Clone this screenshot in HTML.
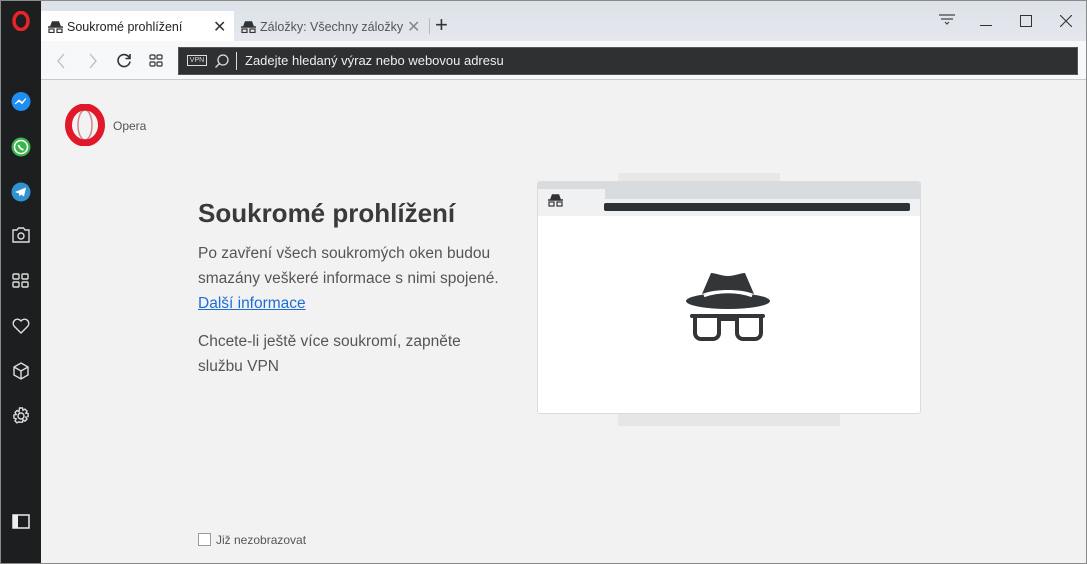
<!DOCTYPE html>
<html><head><meta charset="utf-8"><style>
*{margin:0;padding:0;box-sizing:border-box}
body{width:1087px;height:564px;overflow:hidden;font-family:"Liberation Sans",sans-serif;background:#f2f2f2;position:relative}
.abs{position:absolute}
.win{left:0;top:0;width:1087px;height:564px;border:1px solid #8a8a8a;}
.side{left:1px;top:1px;width:40px;height:562px;background:#1c1e20}
.tabbar{left:41px;top:1px;width:1045px;height:40px;background:linear-gradient(#dde2e9,#e4e8ee)}
.tab{top:11px;height:31px;font-size:12.5px;color:#222;display:flex;align-items:center}
.tool{left:41px;top:41px;width:1045px;height:39px;background:#f7f8fa;border-bottom:1px solid #c8cacc}
.addr{left:178px;top:47px;width:900px;height:28px;background:#2e3031;border:1px solid #555}
.content{left:41px;top:81px;width:1045px;height:482px;background:#f2f2f2}
p{font-size:15.5px;color:#555;line-height:25px}
</style></head><body>
<div class="abs win"></div>
<div class="abs side">
 <svg class="abs" style="left:10px;top:10px" width="20" height="20" viewBox="0 0 20 20"><ellipse cx="10" cy="10" rx="7" ry="8.5" fill="none" stroke="#e8232b" stroke-width="3.5"/></svg>
 <svg class="abs" style="left:9px;top:90px" width="22" height="22" viewBox="0 0 22 22"><circle cx="11" cy="10.5" r="9.5" fill="#1e8ef2"/><path d="M5 13l4-4 3 2.5 4-4-4 5-3-2.5z" fill="#fff" stroke="#fff" stroke-width="1"/></svg>
 <svg class="abs" style="left:9px;top:135px" width="22" height="22" viewBox="0 0 22 22"><circle cx="11" cy="11" r="9.5" fill="#3ab54a"/><circle cx="11" cy="11" r="6.5" fill="none" stroke="#fff" stroke-width="1.5"/><path d="M8.5 9c1 3 3 4.5 5 4.8" stroke="#fff" stroke-width="1.8" fill="none"/></svg>
 <svg class="abs" style="left:9px;top:180px" width="22" height="22" viewBox="0 0 22 22"><circle cx="11" cy="11" r="9.5" fill="#2f93d0"/><path d="M5 11l11-4.5-2 9-3-2-1.5 2-.5-3z" fill="#fff"/></svg>
 <svg class="abs" style="left:10px;top:225px" width="20" height="18" viewBox="0 0 20 18" fill="none" stroke="#ddd" stroke-width="1.4"><path d="M2 4h4l1.5-2h5L14 4h4v12H2z"/><circle cx="10" cy="10" r="3"/></svg>
 <svg class="abs" style="left:11px;top:271px" width="18" height="18" viewBox="0 0 18 18" fill="none" stroke="#ddd" stroke-width="1.4"><rect x="1" y="2" width="6" height="5" rx="1"/><rect x="10" y="2" width="6" height="5" rx="1"/><rect x="1" y="10" width="6" height="5" rx="1"/><rect x="10" y="10" width="6" height="5" rx="1"/></svg>
 <svg class="abs" style="left:10px;top:316px" width="20" height="18" viewBox="0 0 20 18" fill="none" stroke="#ddd" stroke-width="1.4"><path d="M10 16L3 9a4 4 0 0 1 7-5 4 4 0 0 1 7 5z"/></svg>
 <svg class="abs" style="left:10px;top:360px" width="20" height="20" viewBox="0 0 20 20" fill="none" stroke="#ddd" stroke-width="1.4"><path d="M10 2l7 4v8l-7 4-7-4V6zM3 6l7 4 7-4M10 10v8"/></svg>
 <svg class="abs" style="left:10px;top:405px" width="20" height="20" viewBox="0 0 20 20" fill="none" stroke="#ddd" stroke-width="1.4"><circle cx="10" cy="10" r="3"/><path d="M8.5 2h3l.5 2.3 2-1.2 2 2-1.2 2 2.3.5v3l-2.3.5 1.2 2-2 2-2-1.2-.5 2.3h-3L8 15.7l-2 1.2-2-2 1.2-2L2.9 12V9l2.3-.5-1.2-2 2-2 2 1.2z"/></svg>
 <svg class="abs" style="left:11px;top:513px" width="18" height="15" viewBox="0 0 18 15"><rect x="1" y="1" width="16" height="13" fill="none" stroke="#eee" stroke-width="1.5"/><rect x="1" y="1" width="5" height="13" fill="#eee"/></svg>
</div>
<div class="abs tabbar"></div>
<div class="abs tab" style="left:41px;width:193px;background:#fff;padding-left:6px">
 <svg width="17" height="12" viewBox="0 0 17 12"><path d="M4 5l1.5-4h6L13 5zM1 6h15" stroke="#333" stroke-width="1.5" fill="#333"/><rect x="2" y="8" width="5" height="3.5" fill="none" stroke="#333" stroke-width="1.2"/><rect x="10" y="8" width="5" height="3.5" fill="none" stroke="#333" stroke-width="1.2"/></svg>
 <span style="margin-left:3px">Soukromé prohlížení</span><span style="position:absolute;left:172px;font-size:16px;color:#333">✕</span></div>
<div class="abs tab" style="left:240px;width:190px;color:#555">
 <svg width="17" height="12" viewBox="0 0 17 12"><path d="M4 5l1.5-4h6L13 5zM1 6h15" stroke="#333" stroke-width="1.5" fill="#333"/><rect x="2" y="8" width="5" height="3.5" fill="none" stroke="#333" stroke-width="1.2"/><rect x="10" y="8" width="5" height="3.5" fill="none" stroke="#333" stroke-width="1.2"/></svg>
 <span style="margin-left:3px">Záložky: Všechny záložky</span><span style="position:absolute;left:167px;font-size:16px;color:#888">✕</span></div>
<div class="abs" style="left:429px;top:18px;width:1px;height:16px;background:#bbb"></div>
<div class="abs" style="left:435px;top:12px;font-size:22px;color:#333">+</div>
<svg class="abs" style="left:938px;top:13px" width="18" height="14" viewBox="0 0 18 14" fill="none" stroke="#444" stroke-width="1.2"><path d="M1 2h16M3 6h12M7 9l2 2 2-2"/></svg>
<div class="abs" style="left:980px;top:25px;width:12px;height:1px;background:#333"></div>
<div class="abs" style="left:1020px;top:15px;width:12px;height:12px;border:1px solid #333"></div>
<svg class="abs" style="left:1060px;top:15px" width="12" height="12" viewBox="0 0 12 12" stroke="#333" stroke-width="1.1"><path d="M0 0l12 12M12 0L0 12"/></svg>
<div class="abs tool"></div>
<svg class="abs" style="left:56px;top:53px" width="10" height="16" viewBox="0 0 10 16" fill="none" stroke="#bbb" stroke-width="1.3"><path d="M8 1L2 8l6 7"/></svg>
<svg class="abs" style="left:88px;top:53px" width="10" height="16" viewBox="0 0 10 16" fill="none" stroke="#bbb" stroke-width="1.3"><path d="M2 1l6 7-6 7"/></svg>
<svg class="abs" style="left:116px;top:52px" width="16" height="16" viewBox="0 0 16 16" fill="none" stroke="#333" stroke-width="1.6"><path d="M13.5 6A6 6 0 1 0 14 9.5"/><path d="M14 2v4.5H9.5" /></svg>
<svg class="abs" style="left:149px;top:54px" width="14" height="14" viewBox="0 0 14 14" fill="none" stroke="#333" stroke-width="1.2"><rect x="1" y="1" width="5" height="4" rx="1"/><rect x="8" y="1" width="5" height="4" rx="1"/><rect x="1" y="8" width="5" height="4" rx="1"/><rect x="8" y="8" width="5" height="4" rx="1"/></svg>
<div class="abs addr"></div>
<div class="abs" style="left:187px;top:55px;width:20px;height:11px;border:1px solid #ddd;font-size:7px;color:#ddd;text-align:center;line-height:9px">VPN</div>
<svg class="abs" style="left:214px;top:53px" width="16" height="16" viewBox="0 0 16 16" fill="none" stroke="#ddd" stroke-width="1.3"><circle cx="9" cy="7" r="5"/><path d="M5.5 10.5L1.5 14.5"/></svg>
<div class="abs" style="left:236px;top:52px;width:1px;height:18px;background:#ddd"></div>
<div class="abs" style="left:245px;top:53px;font-size:13px;color:#eee">Zadejte hledaný výraz nebo webovou adresu</div>
<div class="abs content"></div>
<svg class="abs" style="left:64px;top:104px" width="42" height="42" viewBox="0 0 42 42"><ellipse cx="21" cy="21" rx="16.5" ry="18" fill="none" stroke="#e0182a" stroke-width="7"/><ellipse cx="21" cy="21" rx="7" ry="15" fill="none" stroke="#b5101f" stroke-width="1.5" opacity=".5"/></svg>
<div class="abs" style="left:113px;top:119px;font-size:12px;color:#555">Opera</div>
<div class="abs" style="left:198px;top:198px;font-size:26px;font-weight:bold;color:#3a3a3a">Soukromé prohlížení</div>
<div class="abs" style="left:198px;top:241px;width:320px"><p style="white-space:nowrap">Po zavření všech soukromých oken budou<br>smazány veškeré informace s nimi spojené.<br><span style="color:#1c6ed6;text-decoration:underline">Další informace</span></p>
<p style="margin-top:13px">Chcete-li ještě více soukromí, zapněte<br>službu VPN</p></div>
<div class="abs" style="left:198px;top:533px;width:13px;height:13px;border:1px solid #999;background:#fff"></div>
<div class="abs" style="left:216px;top:533px;font-size:12px;color:#555">Již nezobrazovat</div>
<div class="abs" style="left:618px;top:173px;width:162px;height:10px;background:#e8e8e8"></div>
<div class="abs" style="left:618px;top:412px;width:222px;height:14px;background:#e6e6e6"></div>
<div class="abs" style="left:537px;top:181px;width:384px;height:233px;background:#fff;border:1px solid #dadcde;border-radius:3px;overflow:hidden">
 <div class="abs" style="left:0;top:0;width:384px;height:34px;background:#d8dcdf"></div>
 <div class="abs" style="left:0;top:7px;width:67px;height:27px;background:#f0f1f3"></div>
 <div class="abs" style="left:67px;top:17px;width:317px;height:17px;background:#f0f1f3"></div>
 <div class="abs" style="left:66px;top:21px;width:306px;height:8px;background:#2f3234;border-radius:2px"></div>
 <svg class="abs" style="left:9px;top:12px" width="17" height="13" viewBox="0 0 17 13"><path d="M4 5l1.5-4h6L13 5zM1 6h15" stroke="#333" stroke-width="1.5" fill="#333"/><rect x="2" y="8" width="5" height="4" fill="none" stroke="#333" stroke-width="1.2"/><rect x="10" y="8" width="5" height="4" fill="none" stroke="#333" stroke-width="1.2"/></svg>
 <svg class="abs" style="left:148px;top:88px" width="86" height="74" viewBox="0 0 86 74"><path d="M25 3c5 0 10 3 17 3s12-3 17-3l9 21c-8-3-17-4-26-4s-18 1-26 4z" fill="#333638"/><ellipse cx="42" cy="31" rx="42" ry="8" fill="#333638"/><path d="M18 26c8-3 16-4 24-4s16 1 24 4" stroke="#fff" stroke-width="2.5" fill="none"/><rect x="4" y="44" width="75" height="4" rx="2" fill="#333638"/><path d="M9 46v17a6 6 0 0 0 6 6h12a6 6 0 0 0 6-6V46M51 46v17a6 6 0 0 0 6 6h12a6 6 0 0 0 6-6V46M33 49h18" stroke="#333638" stroke-width="4" fill="none"/></svg>
</div>
</body></html>
